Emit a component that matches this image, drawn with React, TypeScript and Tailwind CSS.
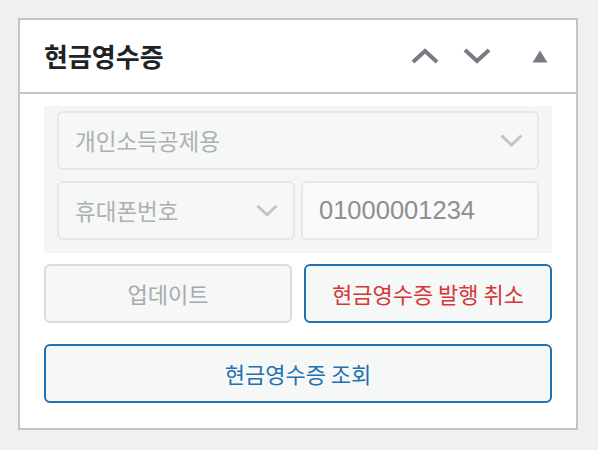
import React from 'react';

const KR = "font-['Noto_Sans_CJK_KR',sans-serif]";

const ChevronDown: React.FC<{ className?: string }> = ({ className }) => (
  <svg viewBox="0 0 23 13" className={className} fill="none">
    <path d="M1.5 1.5 L11.5 11 L21.5 1.5" stroke="currentColor" strokeWidth="3" />
  </svg>
);

const App: React.FC = () => {
  return (
    <div className={`w-[598px] h-[450px] bg-[#f0f0f1] pt-[18px] pl-[18px] ${KR}`}>
      <div className="w-[560px] h-[412px] bg-white border-2 border-[#c3c4c7] flex flex-col">
        {/* Header */}
        <div className="h-[72px] flex items-center pl-[24px] pr-[28px] border-b-2 border-[#c3c4c7] box-content">
          <h2 className="text-[26px] font-bold text-[#1d2327] leading-none">현금영수증</h2>
          <div className="ml-auto flex items-center text-[#787c82]">
            <svg width="28" height="16" viewBox="0 0 28 16" fill="none">
              <path d="M2 14 L14 3 L26 14" stroke="currentColor" strokeWidth="4" />
            </svg>
            <svg width="28" height="16" viewBox="0 0 28 16" className="ml-[24px]" fill="none">
              <path d="M2 2 L14 13 L26 2" stroke="currentColor" strokeWidth="4" />
            </svg>
            <svg width="16" height="13" viewBox="0 0 16 13" className="ml-[41px]">
              <path d="M8 0.5 L15.5 12.5 L0.5 12.5 Z" fill="currentColor" />
            </svg>
          </div>
        </div>

        {/* Body */}
        <div className="pt-[12px] px-[24px] flex flex-col">
          <div className="bg-[#f5f5f5] pt-[5px] pb-[13px] px-[13px] flex flex-col gap-[11px]">
            <div className="h-[59px] rounded-[6px] border-2 border-[#e6e7e8] bg-[#f6f7f7] flex items-center pl-[16px] pr-[14px]">
              <span className="text-[22.5px] text-[#adb0b2]">개인소득공제용</span>
              <ChevronDown className="ml-auto w-[23px] h-[13px] text-[#c3c4c7]" />
            </div>
            <div className="flex gap-[6px]">
              <div className="w-[238px] h-[59px] rounded-[6px] border-2 border-[#e6e7e8] bg-[#f6f7f7] flex items-center pl-[16px] pr-[15px]">
                <span className="text-[22.5px] text-[#adb0b2]">휴대폰번호</span>
                <ChevronDown className="ml-auto w-[22px] h-[13px] text-[#c3c4c7]" />
              </div>
              <div className="w-[238px] h-[59px] rounded-[6px] border-2 border-[#e6e7e8] bg-[#fafafa] flex items-center pl-[16px]">
                <span className="text-[25.5px] text-[#8c8f94] font-['Liberation_Sans',sans-serif]">01000001234</span>
              </div>
            </div>
          </div>

          <div className="mt-[11px] flex gap-[12px]">
            <button className="w-[248px] h-[59px] rounded-[6px] border-2 border-[#dcdcde] bg-[#f6f7f7] text-[22px] text-[#a7aaad]">
              업데이트
            </button>
            <button className="w-[248px] h-[59px] rounded-[6px] border-2 border-[#2271b1] bg-[#f6f7f7] text-[22px] text-[#d63638]">
              현금영수증 발행 취소
            </button>
          </div>

          <button className="mt-[21px] w-full h-[59px] rounded-[6px] border-2 border-[#2271b1] bg-[#f6f7f7] text-[22px] text-[#2271b1]">
            현금영수증 조회
          </button>
        </div>
      </div>
    </div>
  );
};

export default App;
